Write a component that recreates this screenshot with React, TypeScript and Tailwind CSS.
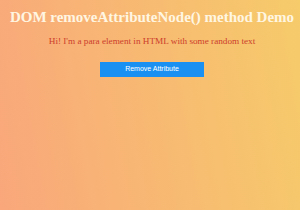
import React from 'react';

const App: React.FC = () => {
  return (
    <div className="w-[300px] h-[210px] bg-linear-[80deg] from-[#f9a77b] to-[#f6cb6a] flex flex-col items-center pt-[9px] pl-[4px]">
      {/* Heading */}
      <h1 className="font-['Liberation_Serif',serif] font-bold text-[15px] leading-[17px] text-[#fff6e2] whitespace-nowrap">
        DOM removeAttributeNode() method Demo
      </h1>

      {/* Paragraph */}
      <p className="mt-[9px] font-['Liberation_Serif',serif] text-[9.2px] leading-[12px] text-[#cc3d2c] whitespace-nowrap">
        Hi! I'm a para element in HTML with some random text
      </p>

      {/* Button */}
      <button className="mt-[15px] w-[104px] h-[15px] bg-[#1a91f2] text-white font-['Liberation_Sans',sans-serif] text-[7px] font-medium flex items-center justify-center">
        Remove Attribute
      </button>
    </div>
  );
};

export default App;
